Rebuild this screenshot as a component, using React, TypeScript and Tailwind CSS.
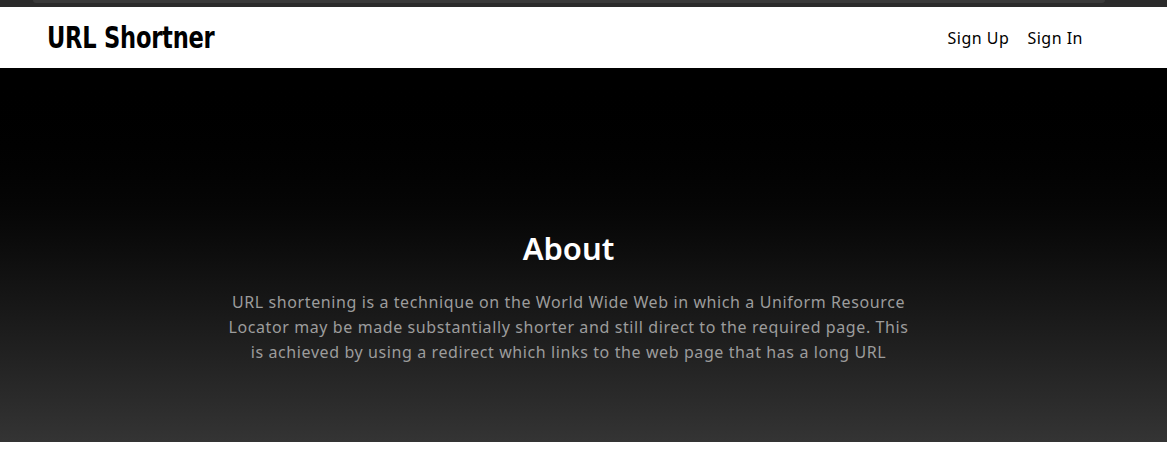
import React from 'react'

const App = () => {
  return (
    <div className="w-full min-h-[449px] bg-white">
      <div className="h-[7px] w-full bg-[#2b2b2b] relative">
        <div className="absolute left-[33px] right-[62px] top-0 h-[3px] rounded-b-sm bg-[#3a3a3a]"></div>
      </div>
      <nav className="h-[61px] w-full bg-white flex items-center justify-between pl-[47px] pr-[84px]">
        <h1
          className="inline-block origin-left scale-x-[0.81] text-[31px] font-bold text-black tracking-[-0.3px] leading-none"
          style={{ fontFamily: 'Impact, "DejaVu Sans Condensed", "Liberation Sans Narrow", sans-serif' }}
        >
          URL Shortner
        </h1>
        <ul
          className="flex items-center gap-[18px] text-[16px] text-black tracking-[0.5px]"
          style={{ fontFamily: '"Segoe UI", "Noto Sans", sans-serif' }}
        >
          <li><a href="#" className="hover:underline">Sign Up</a></li>
          <li><a href="#" className="hover:underline">Sign In</a></li>
        </ul>
      </nav>
      <section
        className="h-[374px] w-full bg-gradient-to-b from-[#000000] to-[#343434] flex flex-col items-center pt-[165px] pr-[30px]"
        style={{ fontFamily: '"Segoe UI", "Noto Sans", sans-serif' }}
      >
        <h2 className="text-[31px] font-semibold text-white leading-none">About</h2>
        <p className="mt-[26px] max-w-[682px] text-center text-[16px] leading-[25px] text-[#9c9c9c] tracking-[0.6px]">
          URL shortening is a technique on the World Wide Web in which a Uniform Resource Locator may be made substantially shorter and still direct to the required page. This is achieved by using a redirect which links to the web page that has a long URL
        </p>
      </section>
    </div>
  )
}

export default App
